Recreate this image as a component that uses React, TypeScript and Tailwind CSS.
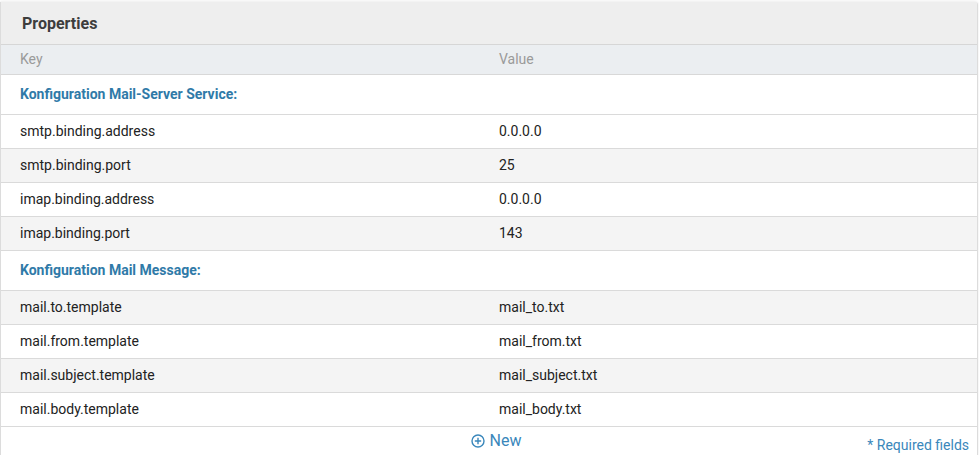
import React from "react";

type Row = { type: "group"; label: string } | { type: "row"; k: string; v: string; alt: boolean };

const rows: Row[] = [
  { type: "group", label: "Konfiguration Mail-Server Service:" },
  { type: "row", k: "smtp.binding.address", v: "0.0.0.0", alt: false },
  { type: "row", k: "smtp.binding.port", v: "25", alt: true },
  { type: "row", k: "imap.binding.address", v: "0.0.0.0", alt: false },
  { type: "row", k: "imap.binding.port", v: "143", alt: true },
  { type: "group", label: "Konfiguration Mail Message:" },
  { type: "row", k: "mail.to.template", v: "mail_to.txt", alt: true },
  { type: "row", k: "mail.from.template", v: "mail_from.txt", alt: false },
  { type: "row", k: "mail.subject.template", v: "mail_subject.txt", alt: true },
  { type: "row", k: "mail.body.template", v: "mail_body.txt", alt: false },
];

export default function App() {
  return (
    <div className="w-[979px] h-[455px] bg-white overflow-hidden" style={{ fontFamily: "Roboto, 'Noto Sans', sans-serif" }}>
      <div className="mt-[2px] w-[978px] border-l border-r border-[#dcdcdc] rounded-tr-[3px] shadow-[0_-1px_3px_rgba(0,0,0,0.08)] bg-white">
        <div className="h-[43px] bg-[#eeeeee] border-b border-[#d6d6d6] flex items-center pl-[21px] pt-[1px]">
          <span className="text-[16px] font-bold text-[#3d3d3d]">Properties</span>
        </div>
        <div className="h-[30px] bg-[#ebeef1] border-b border-[#d8d8d8] grid grid-cols-[479px_1fr] items-center text-[14px] text-[#9a9a9a]">
          <div className="pl-[19px]">Key</div>
          <div className="pl-[19px]">Value</div>
        </div>
        {rows.map((r, i) =>
          r.type === "group" ? (
            <div key={i} className="h-[40px] bg-white border-b border-[#dadada] flex items-center pl-[19px]">
              <span className="text-[14px] font-bold text-[#2f7aa8]">{r.label}</span>
            </div>
          ) : (
            <div
              key={i}
              className={
                "h-[34px] border-b border-[#dadada] grid grid-cols-[479px_1fr] items-center text-[14px] text-[#222] " +
                (r.alt ? "bg-[#f4f4f4]" : "bg-white")
              }
            >
              <div className="pl-[19px]">{r.k}</div>
              <div className="pl-[19px]">{r.v}</div>
            </div>
          )
        )}
        <div className="relative h-[30px] flex items-start justify-center pt-[4px]">
          <div className="flex items-center gap-[5px] text-[#3a87bb] ml-[14px]">
            <svg width="14" height="14" viewBox="0 0 14 14" fill="none" stroke="currentColor" strokeWidth="1.4">
              <circle cx="7" cy="7" r="6" />
              <path d="M7 3.8v6.4M3.8 7h6.4" />
            </svg>
            <span className="text-[16px] leading-[20px]">New</span>
          </div>
          <div className="absolute right-[8px] top-[8px] text-[14px] text-[#3a87bb]">* Required fields</div>
        </div>
      </div>
    </div>
  );
}
